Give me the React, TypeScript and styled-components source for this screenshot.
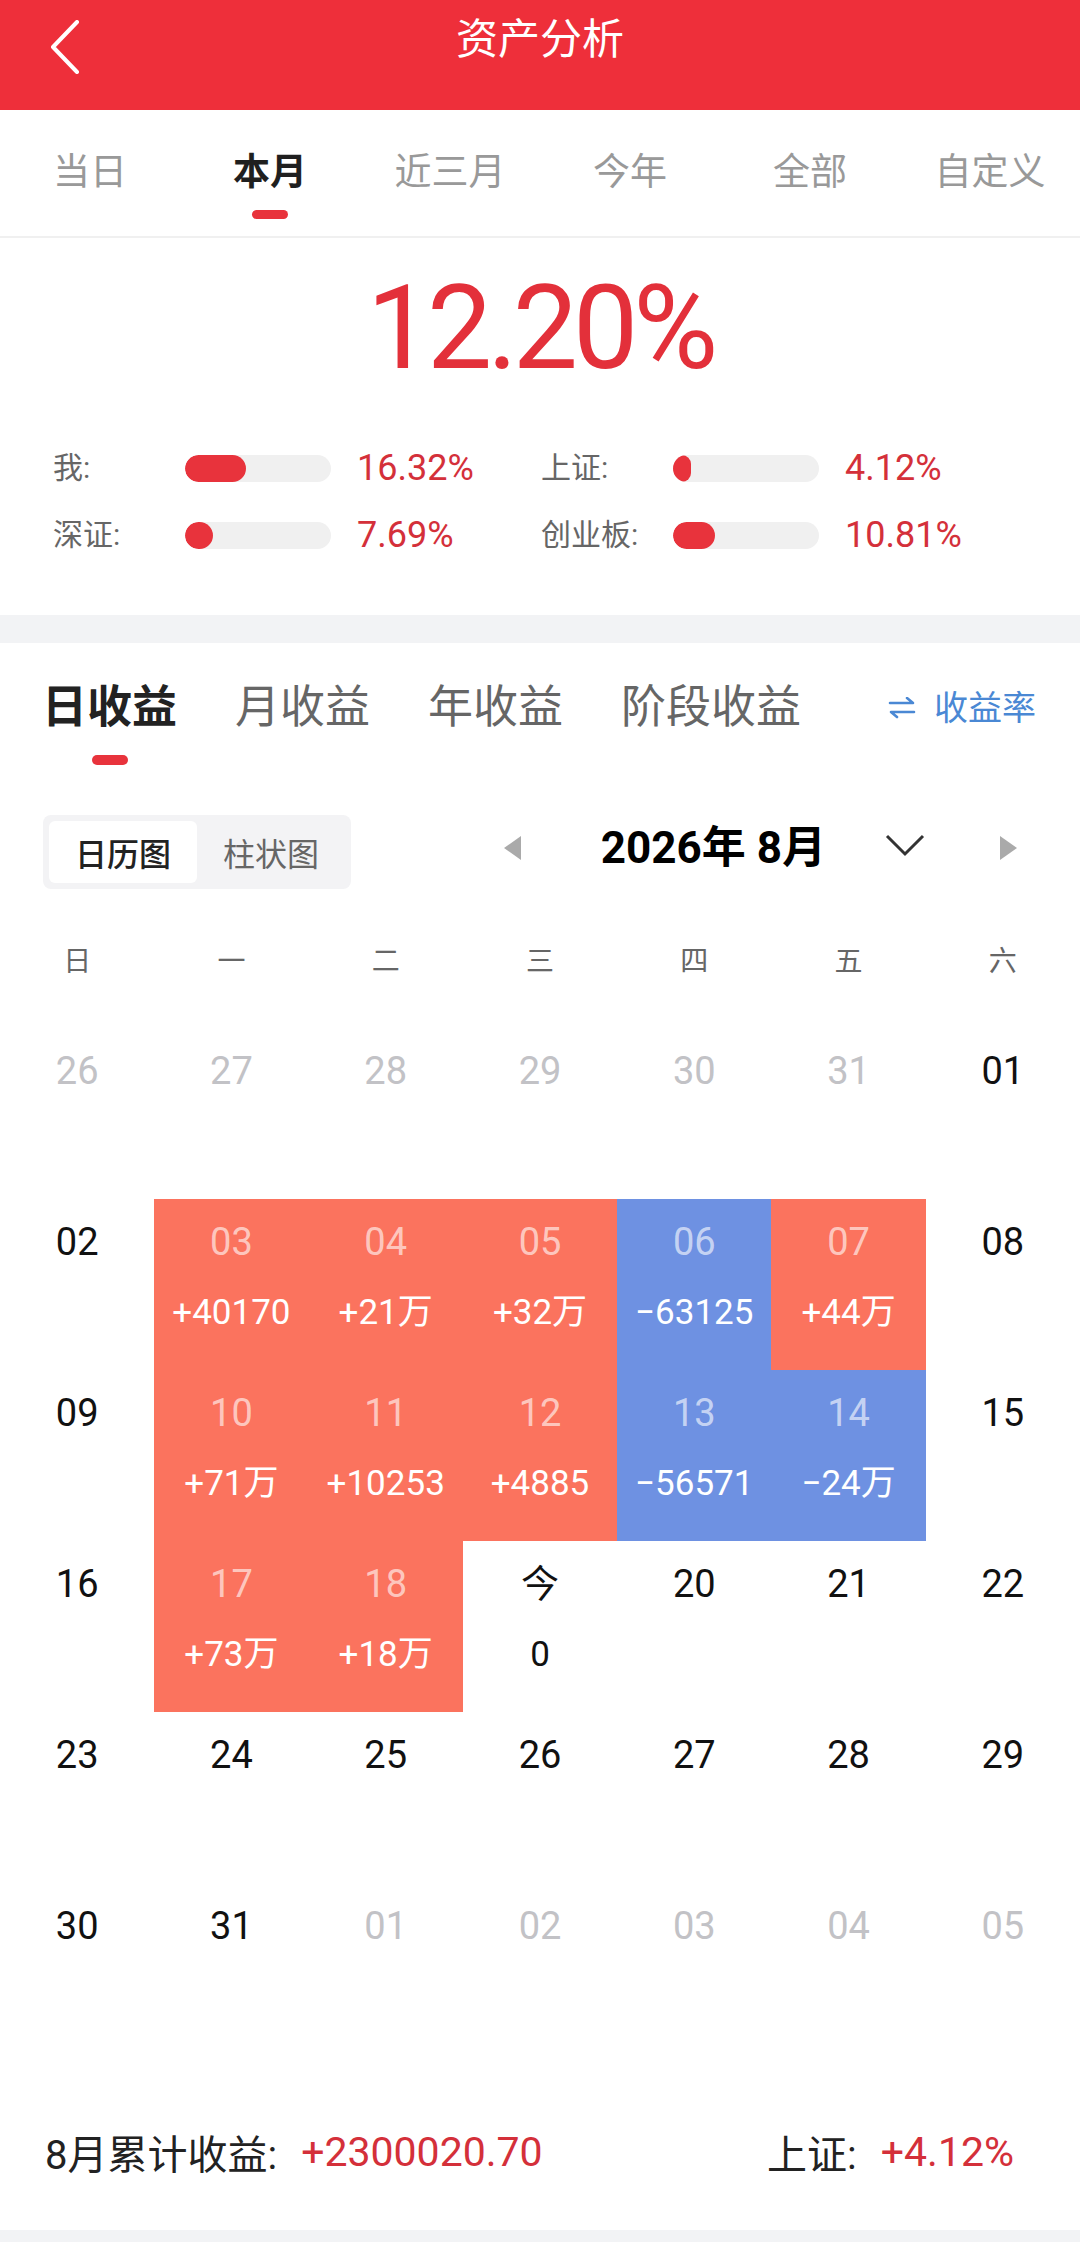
import styled, { createGlobalStyle } from 'styled-components'

const GlobalStyle = createGlobalStyle`
  html, body {
    margin: 0;
    padding: 0;
    background: #f2f3f5;
  }
  body {
    font-family: Roboto, "Noto Sans CJK SC", sans-serif;
    -webkit-font-smoothing: antialiased;
  }
  * { box-sizing: border-box; }
`

const RED = '#ee2f3a'

const Page = styled.div`
  width: 1080px;
  min-height: 2242px;
`

const Header = styled.header`
  height: 110px;
  background: ${RED};
  display: grid;
  grid-template-columns: 110px 1fr 110px;
  align-items: start;
  padding-top: 12px;
`

const BackButton = styled.div`
  padding: 8px 0 0 50px;
  line-height: 0;
`

const Title = styled.h1`
  margin: 0;
  text-align: center;
  color: #fff;
  font-size: 42px;
  line-height: 56px;
  font-weight: 400;
`

const PeriodTabs = styled.nav`
  display: grid;
  grid-template-columns: repeat(6, 1fr);
  background: #fff;
  padding: 40px 0 17px;
  border-bottom: 2px solid #f0f0f0;
`

const PeriodTab = styled.div<{ $active?: boolean }>`
  display: flex;
  flex-direction: column;
  align-items: center;
  font-size: 37px;
  line-height: 46px;
  color: ${p => (p.$active ? '#1f1f1f' : '#999')};
  font-weight: ${p => (p.$active ? 700 : 400)};
`

const PeriodMark = styled.span<{ $show?: boolean }>`
  margin-top: 14px;
  width: 36px;
  height: 9px;
  border-radius: 5px;
  background: #e8333c;
  visibility: ${p => (p.$show ? 'visible' : 'hidden')};
`

const Summary = styled.section`
  background: #fff;
  padding: 30px 0 60px;
`

const BigRate = styled.div`
  text-align: center;
  font-size: 116px;
  line-height: 120px;
  letter-spacing: -5px;
  color: #e3303a;
`

const CompareGrid = styled.div`
  display: grid;
  grid-template-columns: 488px 1fr;
  row-gap: 27px;
  margin-top: 60px;
  padding-left: 53px;
`

const CompareItem = styled.div`
  display: grid;
  grid-template-columns: 132px 146px auto;
  align-items: center;
  height: 40px;
`

const CompareLabel = styled.span`
  font-size: 30px;
  line-height: 40px;
  color: #666;
`

const Track = styled.div`
  height: 27px;
  border-radius: 14px;
  background: #f0f0f0;
  overflow: hidden;
`

const Fill = styled.div`
  height: 100%;
  border-radius: 14px;
  background: #e8333c;
`

const ComparePct = styled.span`
  padding-left: 26px;
  font-size: 36px;
  line-height: 40px;
  color: #d4303a;
`

const Income = styled.section`
  background: #fff;
  margin-top: 28px;
  padding: 40px 0 48px;
`

const KindTabs = styled.div`
  display: flex;
  align-items: flex-start;
  padding: 0 44px 0 42px;
`

const KindTab = styled.div<{ $active?: boolean }>`
  display: flex;
  flex-direction: column;
  align-items: center;
  margin-right: 58px;
  font-size: 45px;
  line-height: 50px;
  color: ${p => (p.$active ? '#222' : '#666')};
  font-weight: ${p => (p.$active ? 700 : 400)};
`

const KindMark = styled.span<{ $show?: boolean }>`
  margin-top: 22px;
  width: 36px;
  height: 10px;
  border-radius: 5px;
  background: #e8333c;
  visibility: ${p => (p.$show ? 'visible' : 'hidden')};
`

const RateSwitch = styled.div`
  margin-left: auto;
  display: flex;
  align-items: center;
  gap: 18px;
  font-size: 34px;
  line-height: 50px;
  color: #4a88d4;
`

const Toolbar = styled.div`
  display: flex;
  align-items: center;
  justify-content: space-between;
  margin-top: 50px;
  padding: 0 63px 0 43px;
`

const ViewToggle = styled.div`
  display: flex;
  padding: 6px;
  border-radius: 8px;
  background: #f3f3f5;
`

const ViewOption = styled.div<{ $active?: boolean }>`
  width: 148px;
  height: 62px;
  display: flex;
  align-items: center;
  justify-content: center;
  border-radius: 6px;
  font-size: 32px;
  background: ${p => (p.$active ? '#fff' : 'transparent')};
  color: ${p => (p.$active ? '#222' : '#666')};
  font-weight: ${p => (p.$active ? 500 : 400)};
`

const MonthNav = styled.div`
  display: flex;
  align-items: center;
  margin-top: -8px;
`

const MonthTitle = styled.div`
  margin: 0 59px 0 79px;
  font-size: 44px;
  font-weight: 700;
  line-height: 56px;
  color: #000;
`

const Chevron = styled.div`
  margin-right: 74px;
  line-height: 0;
  margin-top: -6px;
`

const WeekRow = styled.div`
  display: grid;
  grid-template-columns: repeat(7, 1fr);
  margin-top: 43px;
  height: 60px;
`

const WeekDay = styled.span`
  text-align: center;
  font-size: 28px;
  line-height: 60px;
  color: #666;
`

const CalendarGrid = styled.div`
  display: grid;
  grid-template-columns: repeat(7, 1fr);
  grid-auto-rows: 171px;
  margin-top: 36px;
`

type Tone = 'up' | 'down'

const DayCell = styled.div<{ $tone?: Tone }>`
  display: flex;
  flex-direction: column;
  align-items: center;
  padding-top: 20px;
  background: ${p => (p.$tone === 'up' ? '#fb735e' : p.$tone === 'down' ? '#6e91e2' : 'transparent')};
`

const DayNum = styled.span<{ $muted?: boolean; $onTone?: boolean }>`
  font-size: 38px;
  line-height: 46px;
  color: ${p => (p.$onTone ? 'rgba(255,255,255,0.62)' : p.$muted ? '#c2c2c6' : '#111')};
`

const DayValue = styled.span<{ $onTone?: boolean }>`
  margin-top: 25px;
  font-size: 35px;
  line-height: 46px;
  color: ${p => (p.$onTone ? '#fff' : '#111')};
`

const Footer = styled.div`
  display: flex;
  justify-content: space-between;
  align-items: center;
  height: 60px;
  margin-top: 68px;
  padding: 0 66px 0 45px;
`

const FooterGroup = styled.div`
  display: flex;
  align-items: center;
  font-size: 40px;
  color: #222;
`

const FooterValue = styled.span`
  margin-left: 24px;
  font-size: 41px;
  color: #d4303a;
`

const periods = ['当日', '本月', '近三月', '今年', '全部', '自定义']
const kinds = ['日收益', '月收益', '年收益', '阶段收益']
const weekDays = ['日', '一', '二', '三', '四', '五', '六']

const compare = [
  { label: '我:', pct: '16.32%', fill: 0.42 },
  { label: '上证:', pct: '4.12%', fill: 0.12 },
  { label: '深证:', pct: '7.69%', fill: 0.19 },
  { label: '创业板:', pct: '10.81%', fill: 0.29 },
]

type Day = { d: string; muted?: boolean; tone?: Tone; v?: string }

const weeks: Day[][] = [
  [{ d: '26', muted: true }, { d: '27', muted: true }, { d: '28', muted: true }, { d: '29', muted: true }, { d: '30', muted: true }, { d: '31', muted: true }, { d: '01' }],
  [{ d: '02' }, { d: '03', tone: 'up', v: '+40170' }, { d: '04', tone: 'up', v: '+21万' }, { d: '05', tone: 'up', v: '+32万' }, { d: '06', tone: 'down', v: '−63125' }, { d: '07', tone: 'up', v: '+44万' }, { d: '08' }],
  [{ d: '09' }, { d: '10', tone: 'up', v: '+71万' }, { d: '11', tone: 'up', v: '+10253' }, { d: '12', tone: 'up', v: '+4885' }, { d: '13', tone: 'down', v: '−56571' }, { d: '14', tone: 'down', v: '−24万' }, { d: '15' }],
  [{ d: '16' }, { d: '17', tone: 'up', v: '+73万' }, { d: '18', tone: 'up', v: '+18万' }, { d: '今', v: '0' }, { d: '20' }, { d: '21' }, { d: '22' }],
  [{ d: '23' }, { d: '24' }, { d: '25' }, { d: '26' }, { d: '27' }, { d: '28' }, { d: '29' }],
  [{ d: '30' }, { d: '31' }, { d: '01', muted: true }, { d: '02', muted: true }, { d: '03', muted: true }, { d: '04', muted: true }, { d: '05', muted: true }],
]

const App = () => {
  return (
    <Page>
      <GlobalStyle />
      <Header>
        <BackButton>
          <svg width="30" height="54" viewBox="0 0 30 54">
            <path d="M27 2 L3 27 L27 52" fill="none" stroke="#fff" strokeWidth="4" strokeLinecap="round" strokeLinejoin="round" />
          </svg>
        </BackButton>
        <Title>资产分析</Title>
        <div />
      </Header>

      <PeriodTabs>
        {periods.map(p => (
          <PeriodTab key={p} $active={p === '本月'}>
            {p}
            <PeriodMark $show={p === '本月'} />
          </PeriodTab>
        ))}
      </PeriodTabs>

      <Summary>
        <BigRate>12.20%</BigRate>
        <CompareGrid>
          {compare.map(c => (
            <CompareItem key={c.label}>
              <CompareLabel>{c.label}</CompareLabel>
              <Track>
                <Fill style={{ width: `${c.fill * 100}%` }} />
              </Track>
              <ComparePct>{c.pct}</ComparePct>
            </CompareItem>
          ))}
        </CompareGrid>
      </Summary>

      <Income>
        <KindTabs>
          {kinds.map(k => (
            <KindTab key={k} $active={k === '日收益'}>
              {k}
              <KindMark $show={k === '日收益'} />
            </KindTab>
          ))}
          <RateSwitch>
            <svg width="28" height="22" viewBox="0 0 28 22">
              <path d="M2 6 H25 L19 1 M26 15 H3 L9 20" fill="none" stroke="#4a88d4" strokeWidth="2.6" strokeLinecap="round" strokeLinejoin="round" />
            </svg>
            收益率
          </RateSwitch>
        </KindTabs>

        <Toolbar>
          <ViewToggle>
            <ViewOption $active>日历图</ViewOption>
            <ViewOption>柱状图</ViewOption>
          </ViewToggle>
          <MonthNav>
            <svg width="18" height="24" viewBox="0 0 18 24">
              <polygon points="17,0 17,24 0,12" fill="#aaa" />
            </svg>
            <MonthTitle>2026年 8月</MonthTitle>
            <Chevron>
              <svg width="40" height="24" viewBox="0 0 40 24">
                <path d="M2 3 L20 21 L38 3" fill="none" stroke="#333" strokeWidth="3" />
              </svg>
            </Chevron>
            <svg width="18" height="24" viewBox="0 0 18 24">
              <polygon points="1,0 1,24 18,12" fill="#aaa" />
            </svg>
          </MonthNav>
        </Toolbar>

        <WeekRow>
          {weekDays.map(w => (
            <WeekDay key={w}>{w}</WeekDay>
          ))}
        </WeekRow>

        <CalendarGrid>
          {weeks.flat().map((day, i) => (
            <DayCell key={i} $tone={day.tone}>
              <DayNum $muted={day.muted} $onTone={!!day.tone}>{day.d}</DayNum>
              {day.v && <DayValue $onTone={!!day.tone}>{day.v}</DayValue>}
            </DayCell>
          ))}
        </CalendarGrid>

        <Footer>
          <FooterGroup>
            8月累计收益:
            <FooterValue>+2300020.70</FooterValue>
          </FooterGroup>
          <FooterGroup>
            上证:
            <FooterValue>+4.12%</FooterValue>
          </FooterGroup>
        </Footer>
      </Income>
    </Page>
  )
}

export default App
